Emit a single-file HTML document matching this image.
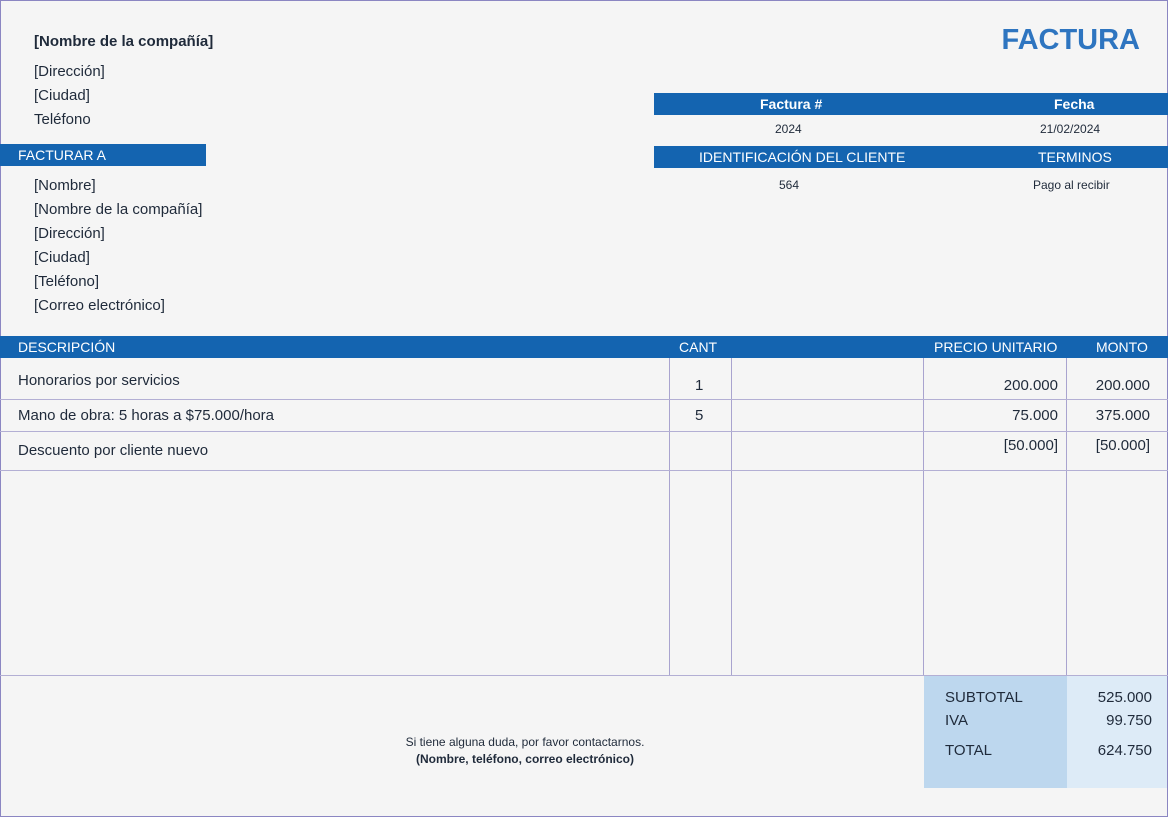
<!DOCTYPE html>
<html><head><meta charset="utf-8"><style>
*{margin:0;padding:0;box-sizing:border-box}
body{width:1168px;height:817px;background:#f5f5f5;font-family:"Liberation Sans",sans-serif;color:#1f2a3a;position:relative;overflow:hidden}
.a{position:absolute;white-space:nowrap}
.bar{position:absolute;background:#1464b0;color:#fff;font-size:14px;height:22px;line-height:22px}
.s{font-size:15px}
.vl{position:absolute;width:1px;background:#a9a4cf;top:358px;height:318px}
.hl{position:absolute;height:1px;background:#b3afd4;left:0;width:1168px}
.r{text-align:right}
</style></head><body>
<div style="position:absolute;inset:0;border:1px solid #8b86c2"></div>
<div class="a" style="left:34px;top:33px;font-size:15px;font-weight:bold">[Nombre de la compañía]</div>
<div class="a s" style="left:34px;top:63px">[Dirección]</div>
<div class="a s" style="left:34px;top:87px">[Ciudad]</div>
<div class="a s" style="left:34px;top:111px">Teléfono</div>
<div class="a" style="right:28px;top:24px;font-size:29px;font-weight:bold;color:#2e75c0">FACTURA</div>

<div class="bar" style="left:654px;top:93px;width:514px;font-weight:bold"><span class="a" style="left:106px">Factura #</span><span class="a" style="left:400px">Fecha</span></div>
<div class="a" style="left:775px;top:122px;font-size:12px">2024</div>
<div class="a" style="left:1040px;top:122px;font-size:12px">21/02/2024</div>
<div class="bar" style="left:654px;top:146px;width:514px"><span class="a" style="left:45px">IDENTIFICACIÓN DEL CLIENTE</span><span class="a" style="left:384px">TERMINOS</span></div>
<div class="a" style="left:779px;top:178px;font-size:12px">564</div>
<div class="a" style="left:1033px;top:178px;font-size:12px">Pago al recibir</div>

<div class="bar" style="left:0;top:144px;width:206px;padding-left:18px">FACTURAR A</div>
<div class="a s" style="left:34px;top:177px">[Nombre]</div>
<div class="a s" style="left:34px;top:201px">[Nombre de la compañía]</div>
<div class="a s" style="left:34px;top:225px">[Dirección]</div>
<div class="a s" style="left:34px;top:249px">[Ciudad]</div>
<div class="a s" style="left:34px;top:273px">[Teléfono]</div>
<div class="a s" style="left:34px;top:297px">[Correo electrónico]</div>

<div class="bar" style="left:0;top:336px;width:1168px"><span class="a" style="left:18px">DESCRIPCIÓN</span><span class="a" style="left:679px">CANT</span><span class="a" style="left:934px">PRECIO UNITARIO</span><span class="a" style="left:1096px">MONTO</span></div>
<div class="vl" style="left:669px"></div><div class="vl" style="left:731px"></div><div class="vl" style="left:923px"></div><div class="vl" style="left:1066px"></div>
<div class="hl" style="top:399px"></div><div class="hl" style="top:431px"></div><div class="hl" style="top:470px"></div><div class="hl" style="top:675px"></div>

<div class="a s" style="left:18px;top:372px">Honorarios por servicios</div>
<div class="a s" style="left:695px;top:377px">1</div>
<div class="a s r" style="right:110px;top:377px">200.000</div>
<div class="a s r" style="right:18px;top:377px">200.000</div>
<div class="a s" style="left:18px;top:407px">Mano de obra: 5 horas a $75.000/hora</div>
<div class="a s" style="left:695px;top:407px">5</div>
<div class="a s r" style="right:110px;top:407px">75.000</div>
<div class="a s r" style="right:18px;top:407px">375.000</div>
<div class="a s" style="left:18px;top:442px">Descuento por cliente nuevo</div>
<div class="a s r" style="right:110px;top:437px">[50.000]</div>
<div class="a s r" style="right:18px;top:437px">[50.000]</div>

<div class="a" style="left:924px;top:676px;width:143px;height:112px;background:#bdd7ee"></div>
<div class="a" style="left:1067px;top:676px;width:100px;height:112px;background:#ddebf7"></div>
<div class="a s" style="left:945px;top:689px">SUBTOTAL</div>
<div class="a s" style="left:945px;top:712px">IVA</div>
<div class="a s" style="left:945px;top:742px">TOTAL</div>
<div class="a s r" style="right:16px;top:689px">525.000</div>
<div class="a s r" style="right:16px;top:712px">99.750</div>
<div class="a s r" style="right:16px;top:742px">624.750</div>

<div class="a" style="left:300px;width:450px;text-align:center;top:735px;font-size:12px">Si tiene alguna duda, por favor contactarnos.</div>
<div class="a" style="left:300px;width:450px;text-align:center;top:752px;font-size:12px;font-weight:bold">(Nombre, teléfono, correo electrónico)</div>
</body></html>
